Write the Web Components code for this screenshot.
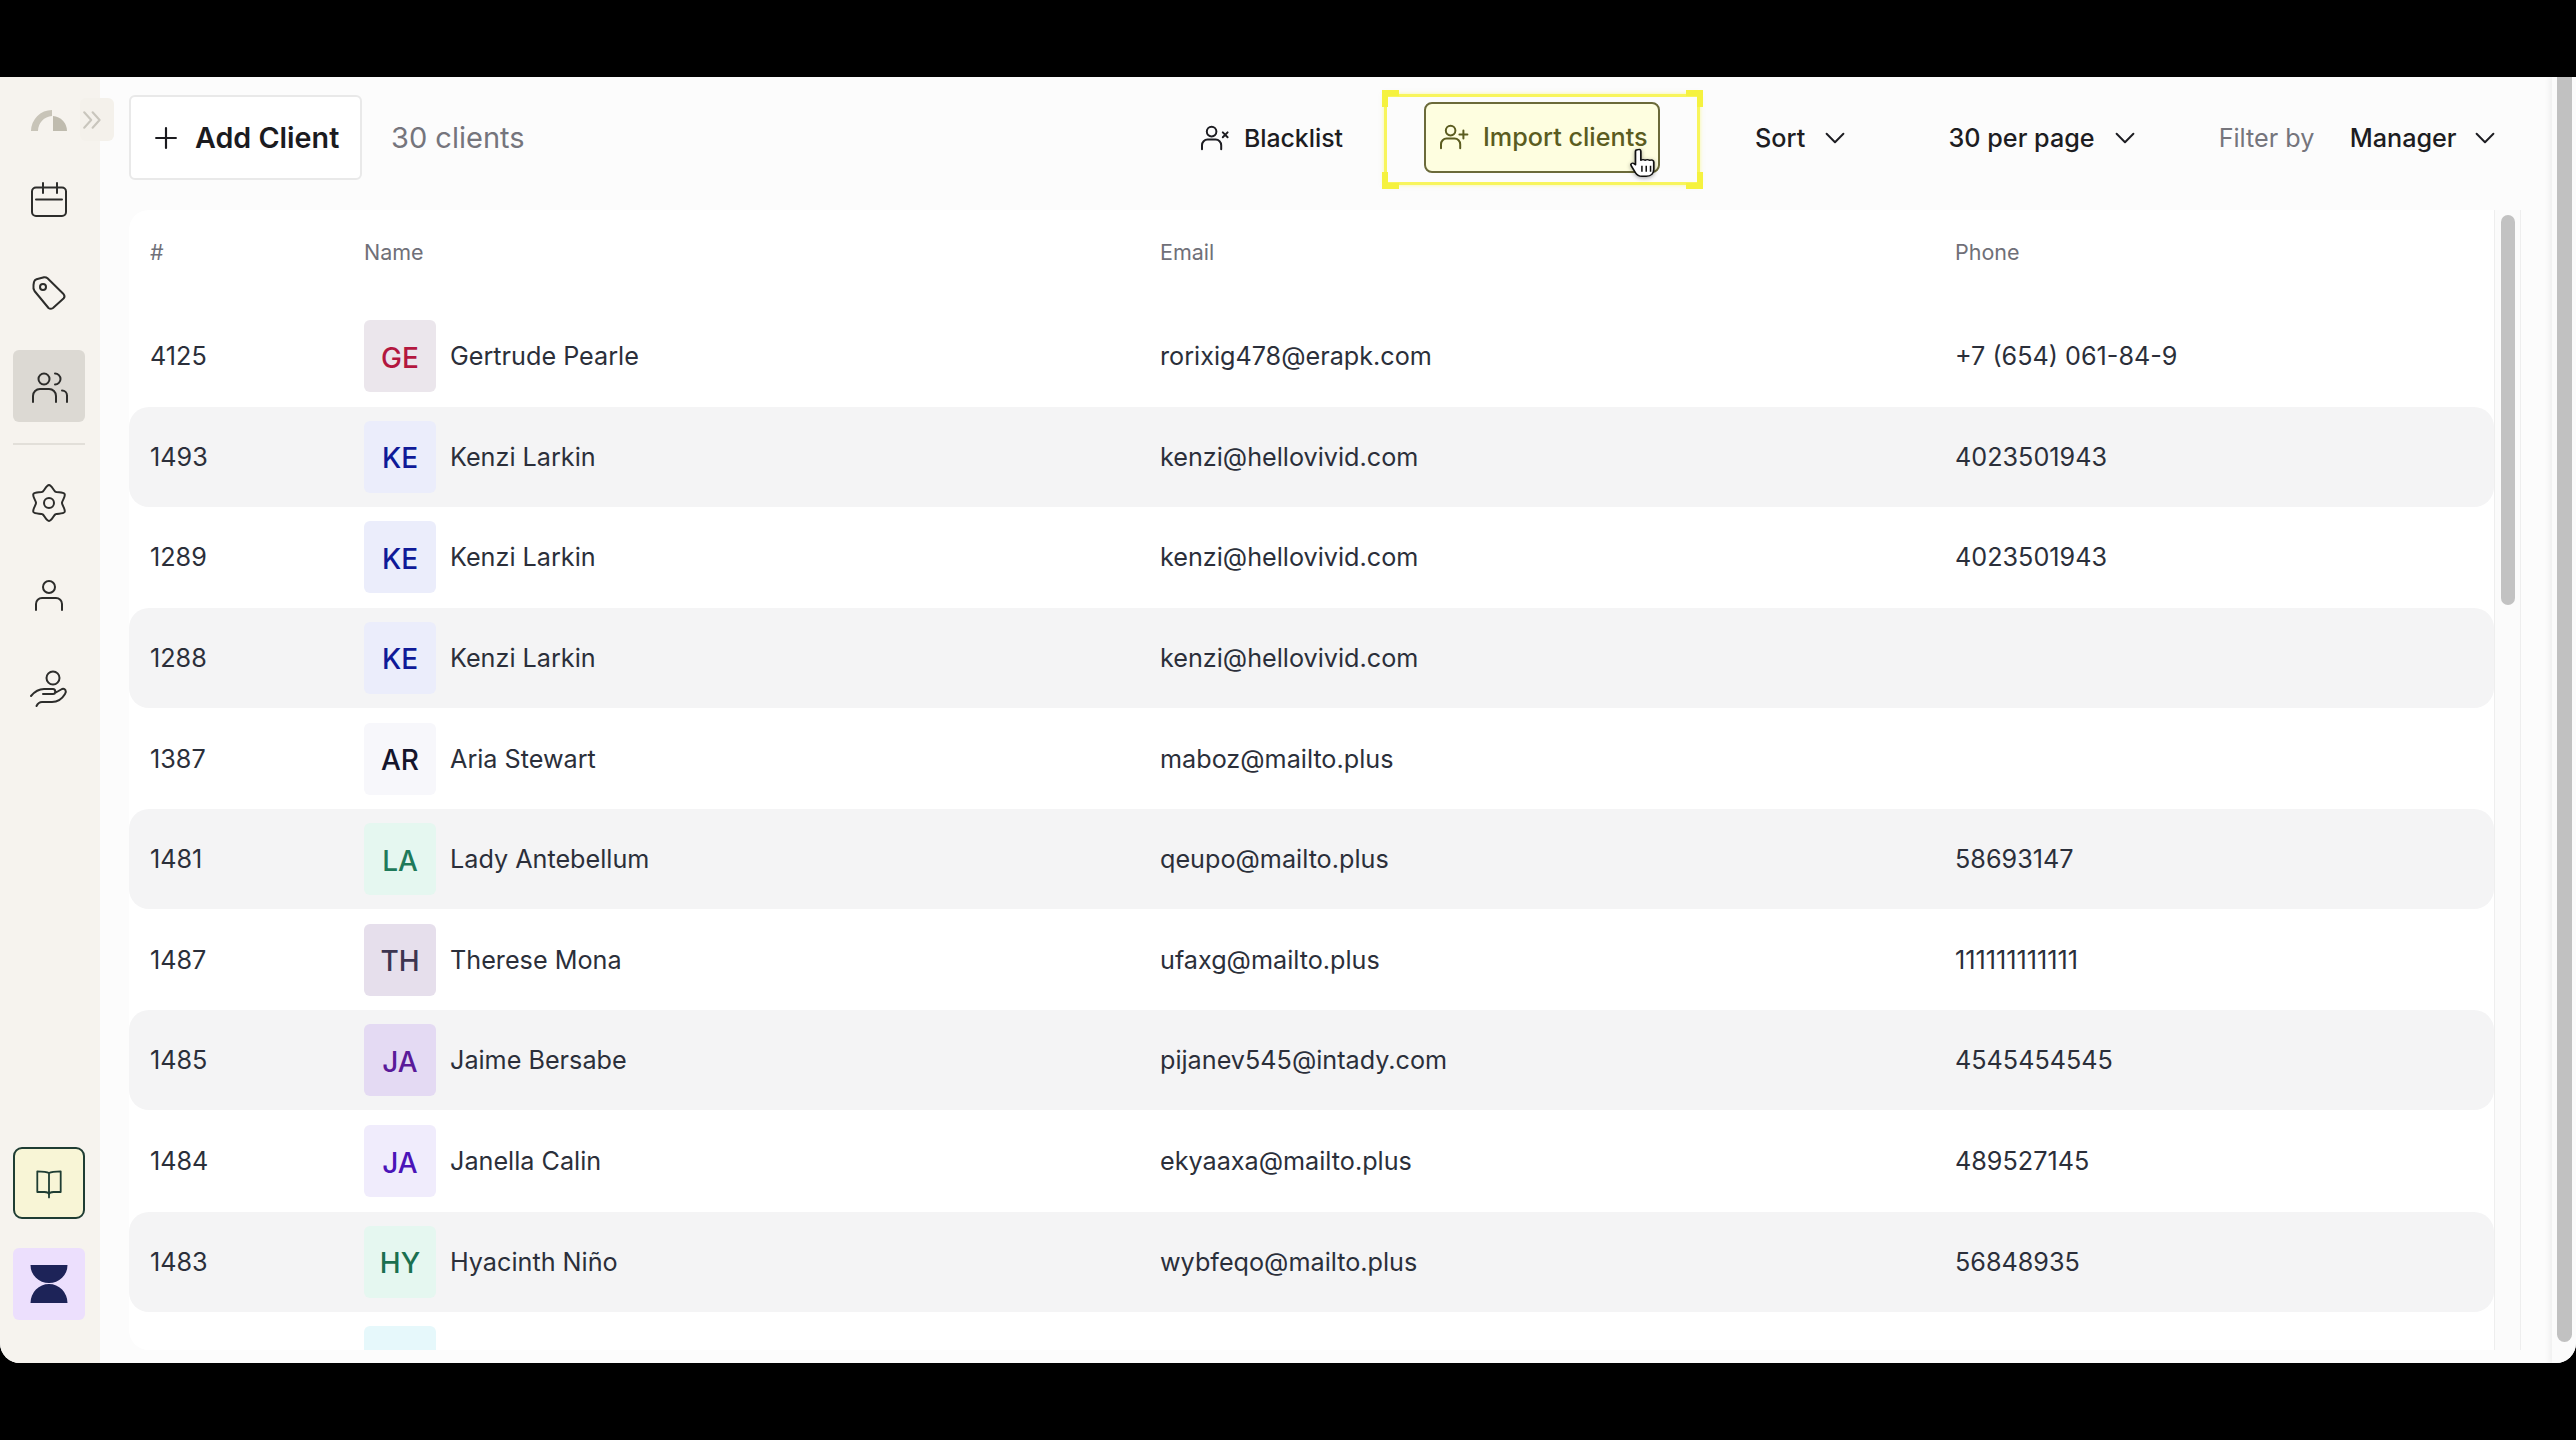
<!DOCTYPE html>
<html lang="en">
<head>
<meta charset="utf-8">
<title>Clients</title>
<style>
  html, body { margin: 0; height: 100%; background: #000; overflow: hidden; }
  body { font-family: Inter, "Liberation Sans", sans-serif; }
</style>
</head>
<body>
<app-shell>
  <app-sidebar slot="sidebar"></app-sidebar>
  <app-toolbar slot="toolbar"></app-toolbar>
  <client-table slot="table">
    <client-row num="4125" name="Gertrude Pearle" email="rorixig478@erapk.com" phone="+7 (654) 061-84-9" bg="#ebe6ec" fg="#b3173f"></client-row>
    <client-row num="1493" name="Kenzi Larkin" email="kenzi@hellovivid.com" phone="4023501943" bg="#ebedfb" fg="#0f1a98"></client-row>
    <client-row num="1289" name="Kenzi Larkin" email="kenzi@hellovivid.com" phone="4023501943" bg="#ebedfb" fg="#0f1a98"></client-row>
    <client-row num="1288" name="Kenzi Larkin" email="kenzi@hellovivid.com" phone="" bg="#ebedfb" fg="#0f1a98"></client-row>
    <client-row num="1387" name="Aria Stewart" email="maboz@mailto.plus" phone="" bg="#f7f7fb" fg="#14142b"></client-row>
    <client-row num="1481" name="Lady Antebellum" email="qeupo@mailto.plus" phone="58693147" bg="#e5f7f0" fg="#1f7a5a"></client-row>
    <client-row num="1487" name="Therese Mona" email="ufaxg@mailto.plus" phone="111111111111" bg="#e6dfec" fg="#3d3550"></client-row>
    <client-row num="1485" name="Jaime Bersabe" email="pijanev545@intady.com" phone="4545454545" bg="#e4daf3" fg="#5a1a99"></client-row>
    <client-row num="1484" name="Janella Calin" email="ekyaaxa@mailto.plus" phone="489527145" bg="#f0ecfc" fg="#4b14b8"></client-row>
    <client-row num="1483" name="Hyacinth Niño" email="wybfeqo@mailto.plus" phone="56848935" bg="#e5f7f0" fg="#1a7050"></client-row>
    <client-row num="" name="" email="" phone="" bg="#e6f8fb" fg="#1a7050"></client-row>
  </client-table>
</app-shell>

<script>
// six rounded lobes with smooth valleys
function gearPath() {
  const pt = (deg, r) => {
    const a = deg * Math.PI / 180;
    return `${(20 + r * Math.cos(a)).toFixed(2)} ${(20 + r * Math.sin(a)).toFixed(2)}`;
  };
  let d = `M${pt(-120, 13)}`;
  for (let i = 0; i < 6; i++) {
    const a = -90 + 60 * i;
    d += `C${pt(a - 21, 13)} ${pt(a - 9, 18)} ${pt(a, 18)}C${pt(a + 9, 18)} ${pt(a + 21, 13)} ${pt(a + 30, 13)}`;
  }
  return d + 'Z';
}

const ICONS = {
  logo: '<path fill="#c8c4b8" stroke="none" d="M2 31A21 21 0 0 1 23 10V16A15 15 0 0 0 9 31Z"/><path fill="#bfbbae" stroke="none" d="M24 16A15 15 0 0 1 38 31H24Z"/>',
  calendar: '<path d="M14 7.5H7a4 4 0 0 0-4 4V32a4 4 0 0 0 4 4h26a4 4 0 0 0 4-4V11.500a4 4 0 0 0-4-4h-5M14 3v10M28 3v10M14 7.500h14M7 19.500h26"/>',
  tag: '<path d="M4.5 12 5 9Q5.5 7 7.5 6.3L15 4.3Q17 4 18.5 5.3L34.5 21Q36.5 23.5 34.5 25.5L24 35Q21.5 36.5 19.5 35L5.5 18Q4 16 4.500 12Z"/><circle cx="14" cy="14" r="3"/>',
  users: '<circle cx="15" cy="13" r="5.500"/><path d="M26 7.500a5.500 5.500 0 0 1 0 11M4 36v-6a7 7 0 0 1 7-7h9a7 7 0 0 1 7 7v6M33 24.500a5 5 0 0 1 5 5V36"/>',
  gear: `<path d="${gearPath()}"/><circle cx="20" cy="20" r="5"/>`,
  person: '<circle cx="20" cy="11" r="6"/><path d="M7 34v-6a6 6 0 0 1 6-6h14a6 6 0 0 1 6 6v6"/>',
  hand: '<circle cx="24" cy="9" r="6.500"/><path d="M2 27C7 21 11 20 15 20H24C27 20 27 25 24 25H14M26 24L33 20C36 19 38 22 36 25 33 30 29 33 23 33H13C11 33 9 34 7.500 37"/>',
  book: '<path d="M20 9C17 7 12 7 7 7V30H15C18 30 20 31 20 33 20 31 22 30 25 30H33V7C28 7 23 7 20 9ZM20 9V36"/>',
  hourglass: '<path fill="#1d2358" stroke="none" d="M1.500 1H38.500A18.500 18 0 0 1 1.500 1ZM1.500 39H38.500A18.500 19 0 0 0 1.500 39Z"/>',
  plus: '<path d="M20 9V31M9 20H31"/>',
  chevrons: '<path d="M6 9L16 20 6 31M18 9L28 20 18 31"/>',
  chevron: '<path d="M8 14L20 26 32 14"/>',
  userx: '<circle cx="17" cy="12" r="6"/><path d="M5 34v-5a7 7 0 0 1 7-7h10a7 7 0 0 1 7 7v5M31 13l6 6M37 13l-6 6"/>',
  userplus: '<circle cx="17" cy="12" r="6"/><path d="M5 34v-5a7 7 0 0 1 7-7h10a7 7 0 0 1 7 7v5M33 12v10M28 17h10"/>'
};

class UiIcon extends HTMLElement {
  connectedCallback() {
    const size = this.getAttribute('size') || 40;
    const width = this.getAttribute('stroke') || 2;
    this.attachShadow({ mode: 'open' }).innerHTML = `
      <style>
        :host { display: inline-flex; flex: none; width: ${size}px; height: ${size}px; }
        svg { width: 100%; height: 100%; fill: none; stroke: currentColor; stroke-width: ${width};
              stroke-linecap: round; stroke-linejoin: round; overflow: visible; }
      </style>
      <svg viewBox="0 0 40 40">${ICONS[this.getAttribute('name')]}</svg>`;
  }
}
customElements.define('ui-icon', UiIcon);

class AppShell extends HTMLElement {
  constructor() {
    super();
    this.attachShadow({ mode: 'open' }).innerHTML = `
      <style>
        :host { display: flex; margin-top: 77px; height: 1286px; background: #fcfcfc; border-radius: 0 0 20px 20px; overflow: hidden; }
        .main { flex: 1; min-width: 0; display: flex; flex-direction: column; padding-left: 29px; }
        .rail { flex: none; width: 24px; margin-left: 31px; background: #fbfbfb; box-shadow: -3px 0 5px rgba(0,0,0,.05); }
        .rail div { width: 15px; margin-left: 5px; height: 1265px; background: #c1c1c1; border-radius: 0 0 8px 8px; }
      </style>
      <slot name="sidebar"></slot>
      <div class="main">
        <slot name="toolbar"></slot>
        <slot name="table"></slot>
      </div>
      <div class="rail"><div></div></div>`;
  }
}
customElements.define('app-shell', AppShell);

class SideItem extends HTMLElement {
  constructor() {
    super();
    this.attachShadow({ mode: 'open' }).innerHTML = `
      <style>
        :host { display: flex; align-items: center; justify-content: center; width: 72px; height: 72px;
                border-radius: 6px; box-sizing: border-box; color: #2d2d2b; }
        :host([active]) { background: #dcd9d3; }
        :host([book]) { background: #f8f5d6; border: 2px solid #1f3d33; border-radius: 9px; color: #1f3d33; }
        :host([brand]) { background: #ecdffd; }
      </style>
      <slot></slot>`;
  }
}
customElements.define('side-item', SideItem);

class AppSidebar extends HTMLElement {
  constructor() {
    super();
    this.attachShadow({ mode: 'open' }).innerHTML = `
      <style>
        :host { display: flex; position: relative; flex-direction: column; align-items: center; flex: none;
                width: 100px; box-sizing: border-box; padding: 0 15px 43px 13px; background: #f6f3ee; }
        .logo { height: 72px; margin-top: 7px; display: flex; align-items: center; }
        .toggle { position: absolute; left: 80px; top: 21px; width: 34px; height: 43px; border-radius: 6px;
                  background: #f4f1eb; color: #c9c6bd; display: flex; align-items: center; }
        .nav { display: flex; flex-direction: column; gap: 21px; margin-top: 8px; }
        hr { width: 72px; height: 2px; margin: 21px 0 22px; border: 0; background: #e2dfd9; }
        .bottom { margin-top: auto; display: flex; flex-direction: column; gap: 29px; }
      </style>
      <div class="logo"><ui-icon name="logo"></ui-icon></div>
      <div class="toggle"><ui-icon name="chevrons" size="28" stroke="3"></ui-icon></div>
      <div class="nav">
        <side-item><ui-icon name="calendar"></ui-icon></side-item>
        <side-item><ui-icon name="tag"></ui-icon></side-item>
        <side-item active><ui-icon name="users"></ui-icon></side-item>
      </div>
      <hr>
      <div class="nav" style="margin-top:0">
        <side-item><ui-icon name="gear"></ui-icon></side-item>
        <side-item><ui-icon name="person"></ui-icon></side-item>
        <side-item><ui-icon name="hand"></ui-icon></side-item>
      </div>
      <div class="bottom">
        <side-item book><ui-icon name="book" size="36"></ui-icon></side-item>
        <side-item brand><ui-icon name="hourglass"></ui-icon></side-item>
      </div>`;
  }
}
customElements.define('app-sidebar', AppSidebar);

class DropMenu extends HTMLElement {
  connectedCallback() {
    this.attachShadow({ mode: 'open' }).innerHTML = `
      <style>
        :host { display: inline-flex; align-items: center; gap: var(--menu-gap, 16px); font-size: 25.2px; font-weight: 500; color: #1d1d22; }
      </style>
      <span>${this.getAttribute('label')}</span>
      <ui-icon name="chevron" size="28" stroke="2.8"></ui-icon>`;
  }
}
customElements.define('drop-menu', DropMenu);

class AppToolbar extends HTMLElement {
  constructor() {
    super();
    this.attachShadow({ mode: 'open' }).innerHTML = `
      <style>
        :host { display: flex; align-items: center; height: 121px; margin-bottom: 12px; flex: none; font-size: 25.2px; }
        .add { display: inline-flex; align-items: center; gap: 11px; width: 233px; height: 85px; box-sizing: border-box;
               padding-left: 17px; background: #fff; border: 2px solid #e9e9e9; border-radius: 6px;
               font-size: 28.7px; font-weight: 600; color: #1b1b1f; }
        .count { margin-left: 29px; font-size: 29px; color: #75757c; }
        .right { margin-left: auto; display: flex; align-items: center; margin-right: 22px; }
        .black { display: inline-flex; align-items: center; gap: 14px; font-size: 24.8px; font-weight: 500; color: #1d1d22; }
        .frame { position: relative; box-sizing: border-box; width: 316px; height: 91px; margin: 3px 0 0 40.5px;
                 padding: 5px 37px; border: 3px solid #f8f55c; box-shadow: 0 0 4px rgba(247,243,60,.5); }
        .frame i { position: absolute; width: 11px; height: 11px; border: 0 solid #f5f23f; }
        .frame i:nth-child(1) { left: -5px; top: -7px; border-width: 6px 0 0 6px; }
        .frame i:nth-child(2) { right: -6px; top: -7px; border-width: 6px 6px 0 0; }
        .frame i:nth-child(3) { left: -5px; bottom: -7px; border-width: 0 0 6px 6px; }
        .frame i:nth-child(4) { right: -6px; bottom: -7px; border-width: 0 6px 6px 0; }
        .import { position: relative; display: flex; align-items: center; gap: 14px; height: 71px; box-sizing: border-box;
                  padding-left: 11.5px; background: #fefee0; border: 2px solid #6b6a3a; border-radius: 8px;
                  font-weight: 500; color: #5b5c20; white-space: nowrap; }
        .cursor { position: absolute; left: 203px; top: 44px; width: 28px; height: 30px;
                  filter: drop-shadow(0 1px 2px rgba(0,0,0,.35)); }
        .sort { margin-left: 55.5px; }
        .page { margin-left: 99.300px; }
        .filter { margin-left: 80px; color: #75757c; }
        .mgr { margin-left: 35.300px; --menu-gap: 14.4px; }
      </style>
      <div class="add"><ui-icon name="plus" size="36" stroke="2.4"></ui-icon>Add Client</div>
      <span class="count">30 clients</span>
      <div class="right">
        <span class="black"><ui-icon name="userx" size="32" stroke="2.5"></ui-icon>Blacklist</span>
        <div class="frame">
          <i></i><i></i><i></i><i></i>
          <div class="import"><ui-icon name="userplus" size="32" stroke="2.5"></ui-icon>Import clients
            <svg class="cursor" viewBox="0 0 26 34" preserveAspectRatio="none">
              <path d="M8 2c2-1 3 0 3 2v10c1-1 3-1 4 0 1-1 3-1 4 0 2-1 4 0 4 2v8c0 4-2 8-7 8h-4c-3 0-5-2-6-4L2 20c-1-2 1-4 3-2l1 1V4c0-1 1-2 2-2z" fill="#fff" stroke="#111" stroke-width="1.6" stroke-linejoin="round"/>
              <path d="M12 20v7M16 20v7M20 20v7" stroke="#111" stroke-width="1.4"/>
            </svg>
          </div>
        </div>
        <drop-menu class="sort" label="Sort"></drop-menu>
        <drop-menu class="page" label="30 per page"></drop-menu>
        <span class="filter">Filter by</span>
        <drop-menu class="mgr" label="Manager"></drop-menu>
      </div>`;
  }
}
customElements.define('app-toolbar', AppToolbar);

class ClientTable extends HTMLElement {
  constructor() {
    super();
    this.attachShadow({ mode: 'open' }).innerHTML = `
      <style>
        :host { display: flex; height: 1140px; flex: none; background: #fff; border-radius: 20px 0 0 20px; overflow: hidden; }
        .body { flex: 1; min-width: 0; }
        .head { display: grid; grid-template-columns: 214px 796px 795px 1fr; height: 96px; align-items: center;
                box-sizing: border-box; padding: 0 0 12px 21px; font-size: 21.5px; color: #6f7078; }
        .rows { display: flex; flex-direction: column; gap: .625px; }
        .track { flex: none; width: 27px; box-sizing: border-box; background: #fbfbfb;
                 border-left: 1px solid #eee; border-right: 1px solid #eee; padding: 5px 6px; }
        .thumb { width: 14px; height: 390px; border-radius: 7px; background: #c2c2c2; }
      </style>
      <div class="body">
        <div class="head"><span>#</span><span>Name</span><span>Email</span><span>Phone</span></div>
        <div class="rows"><slot></slot></div>
      </div>
      <div class="track"><div class="thumb"></div></div>`;
  }
}
customElements.define('client-table', ClientTable);

class ClientRow extends HTMLElement {
  connectedCallback() {
    const name = this.getAttribute('name');
    const bg = this.getAttribute('bg');
    const fg = this.getAttribute('fg');
    this.attachShadow({ mode: 'open' }).innerHTML = `
      <style>
        :host { display: grid; grid-template-columns: 214px 796px 795px 1fr; align-items: center; flex: none;
                height: 100px; box-sizing: border-box; padding-left: 21px; border-radius: 20px;
                font-size: 25.2px; color: #2b2f3a; }
        :host(:nth-child(even)) { background: #f4f4f5; }
        .name { display: flex; align-items: center; gap: 14px; }
        .avatar { width: 72px; height: 72px; border-radius: 6px; display: flex; align-items: center; justify-content: center;
                  padding-top: 3px; box-sizing: border-box; font-size: 28px; font-weight: 500; background: ${bg}; color: ${fg}; }
      </style>
      <span>${this.getAttribute('num')}</span>
      <div class="name"><span class="avatar">${name.slice(0, 2).toUpperCase()}</span><span>${name}</span></div>
      <span>${this.getAttribute('email')}</span>
      <span>${this.getAttribute('phone')}</span>`;
  }
}
customElements.define('client-row', ClientRow);
</script>
</body>
</html>
